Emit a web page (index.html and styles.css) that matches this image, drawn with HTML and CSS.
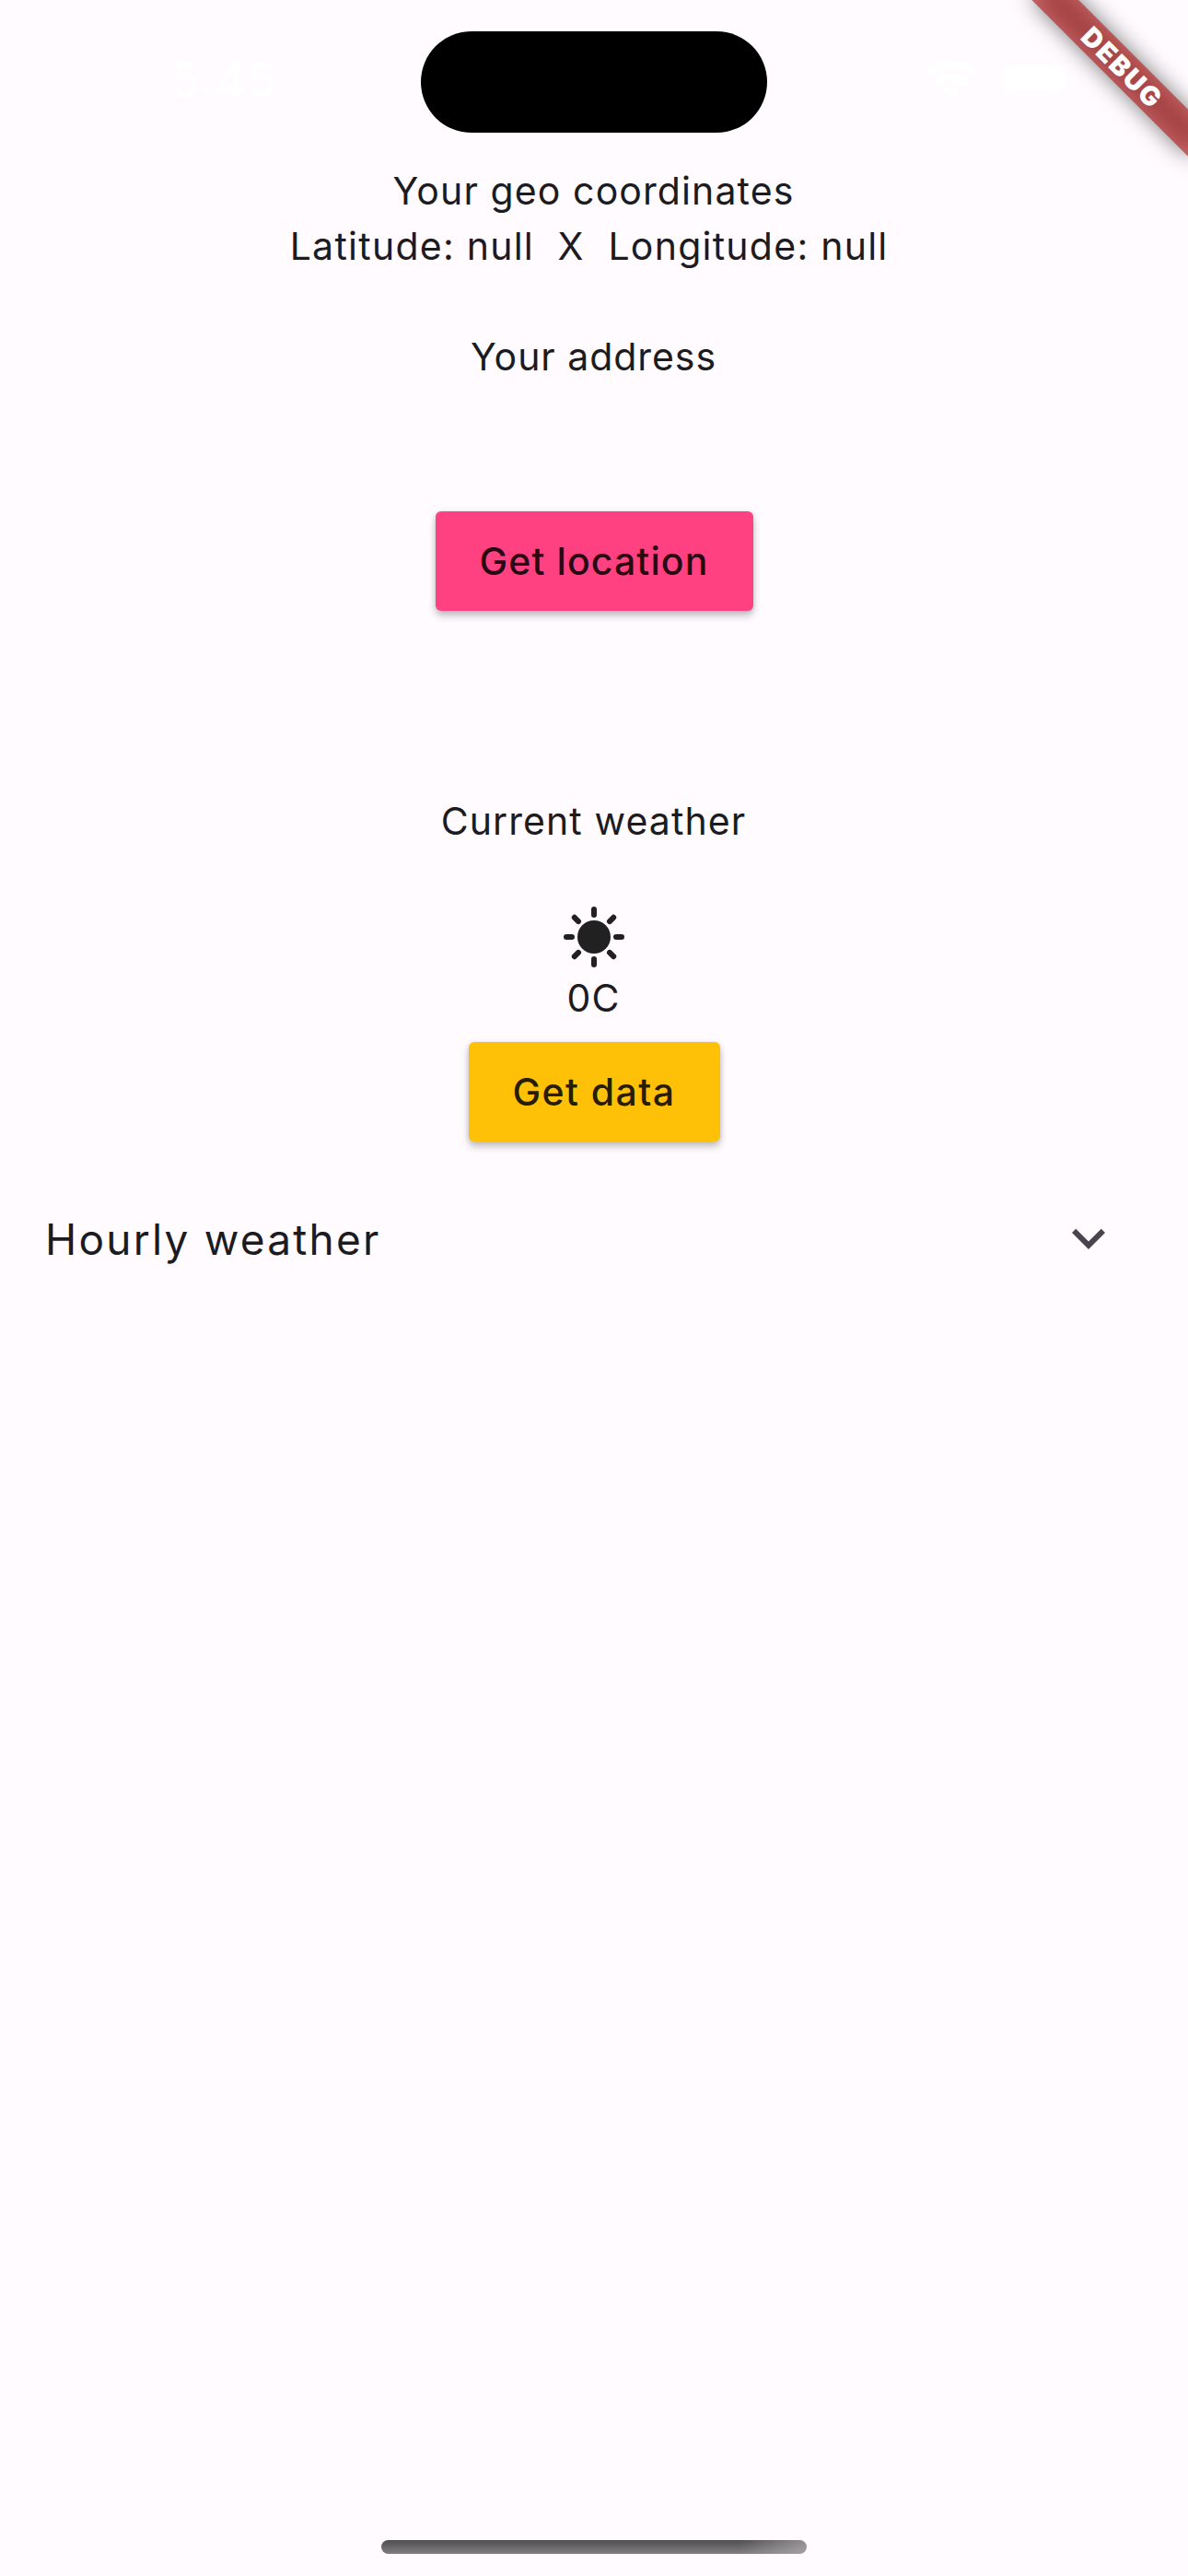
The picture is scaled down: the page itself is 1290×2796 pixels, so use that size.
FILE: index.html
```html
<!DOCTYPE html>
<html lang="en">
<head>
<meta charset="utf-8">
<title>Weather</title>
<link rel="stylesheet" href="styles.css">
</head>
<body>
<div class="screen">
  <header class="status">
    <div class="clock">5:45</div>
    <div class="island"></div>
    <div class="indicators">
      <svg class="signal" width="64" height="42" viewBox="0 0 64 42"><path d="M0 28h11v12H0zM17 28h11v12H17zM34 28h11v12H34zM51 28h11v12H51z"/></svg>
      <svg class="wifi" width="60" height="42" viewBox="0 0 60 42"><path d="M30 0C18.600 0 8.400 4.300 1 11.300c-.7.7-.7 1.700 0 2.400l4 4c.7.7 1.700.7 2.400 0C13.300 12.300 21.300 9.300 30 9.300s16.700 3 22.600 8.400c.7.7 1.700.7 2.400 0l4-4c.7-.7.7-1.700 0-2.400C51.600 4.300 41.400 0 30 0zM30 14.500c-7.300 0-14 2.700-19 7.200-.7.700-.7 1.700 0 2.400l4.300 4.300c.6.600 1.600.7 2.300.1 3.300-2.900 7.600-4.700 12.400-4.700s9.100 1.800 12.400 4.700c.7.6 1.700.5 2.300-.1l4.300-4.300c.7-.7.7-1.700 0-2.400-5-4.500-11.700-7.200-19-7.200zM30 28.500c-3.300 0-6.200 1.200-8.500 3.100-.7.600-.7 1.700-.1 2.300l7.400 7.400c.7.700 1.700.7 2.400 0l7.400-7.400c.6-.6.6-1.700-.1-2.300-2.300-1.900-5.200-3.100-8.500-3.100z"/></svg>
      <svg class="battery" width="90" height="42" viewBox="0 0 90 42"><rect x="1.500" y="1.500" width="77" height="38" rx="12" fill="none" stroke="#fff" stroke-opacity=".35" stroke-width="3"/><rect x="6" y="6" width="68" height="29" rx="8"/><path d="M83 14c3 1 4.500 4 4.500 7s-1.500 6-4.500 7z" opacity=".5"/></svg>
    </div>
  </header>

  <main class="content">
    <p class="line coords-title">Your geo coordinates</p>
    <p class="line coords">Latitude: null  X  Longitude: null </p>
    <p class="line"></p>
    <p class="line address-title">Your address</p>
    <p class="line"></p>
    <p class="line"></p>
    <button class="button pink">Get location</button>
    <p class="line"></p>
    <p class="line"></p>
    <p class="line"></p>
    <p class="line weather-title">Current weather</p>
    <p class="line"></p>
    <svg class="sun" width="72" height="72" viewBox="-12 -12 24 24">
      <circle r="6"/>
      <path d="M0-10v2M0 8v2M-10 0h2M8 0h2M-7.070-7.070l1.410 1.410M5.660 5.660l1.410 1.410M-7.070 7.070l1.410-1.410M5.660-5.660l1.410-1.410"/>
    </svg>
    <p class="line">0C</p>
    <button class="button amber">Get data</button>
    <div class="tile">
      <span class="tile-title">Hourly weather</span>
      <svg class="chevron" width="72" height="72" viewBox="0 0 24 24"><path d="M16.590 8.590 12 13.170 7.410 8.590 6 10l6 6 6-6z"/></svg>
    </div>
  </main>

  <div class="home-indicator"></div>
  <div class="banner"><div class="ribbon">DEBUG</div></div>
</div>
</body>
</html>
```
FILE: styles.css
```css
* {
  box-sizing: border-box;
}

body {
  margin: 0;
  background: #fffbff;
  font-family: Inter, "Noto Sans", sans-serif;
  color: #1c1b1f;
}

.screen {
  position: relative;
  display: flex;
  flex-direction: column;
  width: 1290px;
  height: 2796px;
  overflow: hidden;
}

.status {
  flex: none;
  display: grid;
  grid-template-columns: 456.5px 376.5px 1fr;
  height: 177px;
  padding-top: 33.5px;
}

.clock {
  padding-left: 184px;
  color: #fff;
  font-size: 52px;
  font-weight: 600;
  line-height: 108px;
}

.island {
  height: 110.5px;
  border-radius: 56px;
  background: #000;
}

.indicators {
  display: flex;
  gap: 20px;
  padding: 31px 0 0 82px;
  fill: #fff;
}

.signal {
  margin-right: 4px;
  opacity: 0.35;
}

.content {
  flex: 1;
  display: flex;
  flex-direction: column;
  align-items: center;
}

.line {
  flex: none;
  height: 60px;
  margin: 0;
  padding-right: 1px;
  font-size: 41px;
  line-height: 60px;
  letter-spacing: 1.1px;
  white-space: pre;
}

.coords {
  padding: 0 0 0 2px;
  letter-spacing: 1.25px;
}

.address-title {
  letter-spacing: 0.95px;
}

.button {
  flex: none;
  height: 108px;
  margin: 18px 0;
  padding: 0;
  border: 0;
  border-radius: 6px;
  box-shadow: 0 6px 9px rgba(0, 0, 0, 0.2), 0 1px 6px rgba(0, 0, 0, 0.14);
  color: rgba(0, 0, 0, 0.87);
  font: 500 41px/108px Inter, "Noto Sans", sans-serif;
}

.pink {
  width: 345px;
  background: #ff4081;
  letter-spacing: 1.1px;
}

.amber {
  width: 273px;
  background: #ffc107;
  letter-spacing: 1.4px;
}

.sun {
  flex: none;
  fill: #212121;
}

.sun path {
  stroke: #212121;
  stroke-width: 2;
  stroke-linecap: round;
}

.tile {
  display: flex;
  align-items: center;
  justify-content: space-between;
  width: 100%;
  height: 174px;
  padding: 0 72px 0 49px;
}

.tile-title {
  padding-top: 2px;
  font-size: 46px;
  line-height: 72px;
  letter-spacing: 2.22px;
}

.chevron {
  fill: #49454f;
}

.home-indicator {
  flex: none;
  align-self: center;
  width: 462px;
  height: 15px;
  margin-bottom: 24px;
  border-radius: 8px;
  background:
    linear-gradient(100deg, transparent 84%, rgba(190, 187, 190, 0.6) 100%),
    linear-gradient(#4f4e50, #807e80);
}

/* Corner ribbon, rotated about the top right corner of the screen */
.banner {
  position: absolute;
  top: 84px;
  left: 1170px;
  width: 240px;
  height: 36px;
  transform: rotate(45deg);
  transform-origin: 120px -84px;
}

.banner::before {
  content: "";
  position: absolute;
  inset: 0;
  background: rgba(0, 0, 0, 0.5);
  filter: blur(12px);
}

.ribbon {
  position: relative;
  height: 36px;
  padding-left: 3px;
  background: rgba(183, 28, 28, 0.627);
  color: #fff;
  font-size: 29px;
  font-weight: 900;
  line-height: 37px;
  letter-spacing: 2px;
  text-align: center;
}
```
